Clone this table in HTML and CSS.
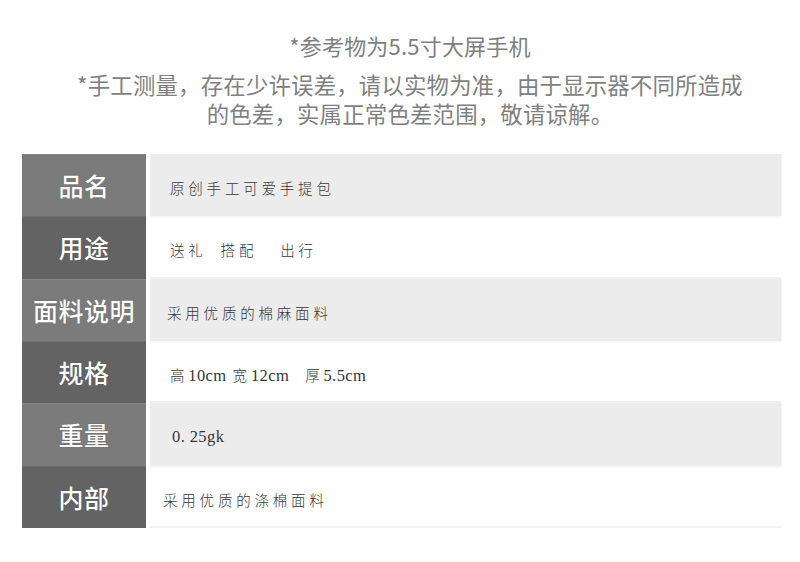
FILE: index.html
```html
<!DOCTYPE html>
<html lang="zh">
<head>
<meta charset="utf-8">
<title>商品参数</title>
<link rel="stylesheet" href="styles.css">
</head>
<body>
<div class="page">
  <header class="intro">
    <p class="title">*参考物为5.5寸大屏手机</p>
    <p class="note">*手工测量，存在少许误差，请以实物为准，由于显示器不同所造成<br>的色差，实属正常色差范围，敬请谅解。</p>
  </header>
  <div class="spec">
    <div class="row light">
      <div class="label">品名</div>
      <div class="value">原创手工可爱手提包</div>
    </div>
    <div class="row dark">
      <div class="label">用途</div>
      <div class="value"><span class="w1">送礼</span><span class="w2">搭配</span><span>出行</span></div>
    </div>
    <div class="row light">
      <div class="label">面料说明</div>
      <div class="value shift-l">采用优质的棉麻面料</div>
    </div>
    <div class="row dark">
      <div class="label">规格</div>
      <div class="value"><span class="w3">高<span class="lat">10cm</span></span><span class="w4">宽<span class="lat">12cm</span></span><span>厚<span class="lat">5.5cm</span></span></div>
    </div>
    <div class="row light">
      <div class="label">重量</div>
      <div class="value shift-r"><span class="lat">0. 25gk</span></div>
    </div>
    <div class="row dark">
      <div class="label">内部</div>
      <div class="value shift-ll">采用优质的涤棉面料</div>
    </div>
  </div>
</div>
</body>
</html>
```

FILE: styles.css
```css
html, body {
  margin: 0;
  padding: 0;
  background: #ffffff;
}

.page {
  width: 800px;
  height: 562px;
  padding-top: 30px;
  box-sizing: border-box;
}

.intro {
  padding-left: 20px;
  text-align: center;
  color: #7f7f7f;
  font-family: "Noto Sans CJK SC", "Noto Sans", sans-serif;
}

.intro p {
  margin: 0;
}

.title {
  font-size: 22px;
  line-height: 30px;
  letter-spacing: 0.2px;
}

.note {
  margin-top: 10px !important;
  font-size: 22.4px;
  line-height: 29px;
  letter-spacing: 0.2px;
}

.spec {
  margin: 26px 0 0 22px;
  width: 759px;
  display: flex;
  flex-direction: column;
}

.row {
  display: flex;
  height: 62.33px;
}

.label {
  width: 124px;
  flex: none;
  display: flex;
  align-items: center;
  justify-content: center;
  color: #ffffff;
  font-family: "Noto Sans CJK SC", sans-serif;
  font-weight: 500;
  font-size: 25px;
  letter-spacing: 0.5px;
  text-shadow: 0 0 1px rgba(0, 0, 0, 0.35);
  box-shadow: inset 0 1px 0 rgba(255, 255, 255, 0.08);
}

.light .label {
  background: #7b7b7b;
}

.dark .label {
  background: #636363;
}

.value {
  flex: 1;
  margin-left: 4px;
  display: flex;
  align-items: center;
  padding: 5px 0 0 20px;
  box-sizing: border-box;
  color: #363636;
  font-family: "Noto Sans CJK SC", sans-serif;
  font-weight: 300;
  font-size: 14.5px;
  letter-spacing: 3.8px;
}

.light .value {
  background: #ececec;
  box-shadow: 1px 0 1px rgba(0, 0, 0, 0.04);
}

.dark .value {
  background: #ffffff;
  box-shadow: inset 0 -2px 0 #f2f2f2, inset 0 2px 0 #f7f7f7;
}

.lat {
  font-family: "Liberation Serif", serif;
  font-size: 16.5px;
  letter-spacing: 0.4px;
  font-weight: 400;
}

.w1 { margin-right: 14px; }
.w2 { margin-right: 23px; }
.w3 { margin-right: 6px; }
.w4 { margin-right: 16px; }

.shift-l { padding-left: 17px; }
.shift-ll { padding-left: 13px; }
.shift-r { padding-left: 22px; }
```
